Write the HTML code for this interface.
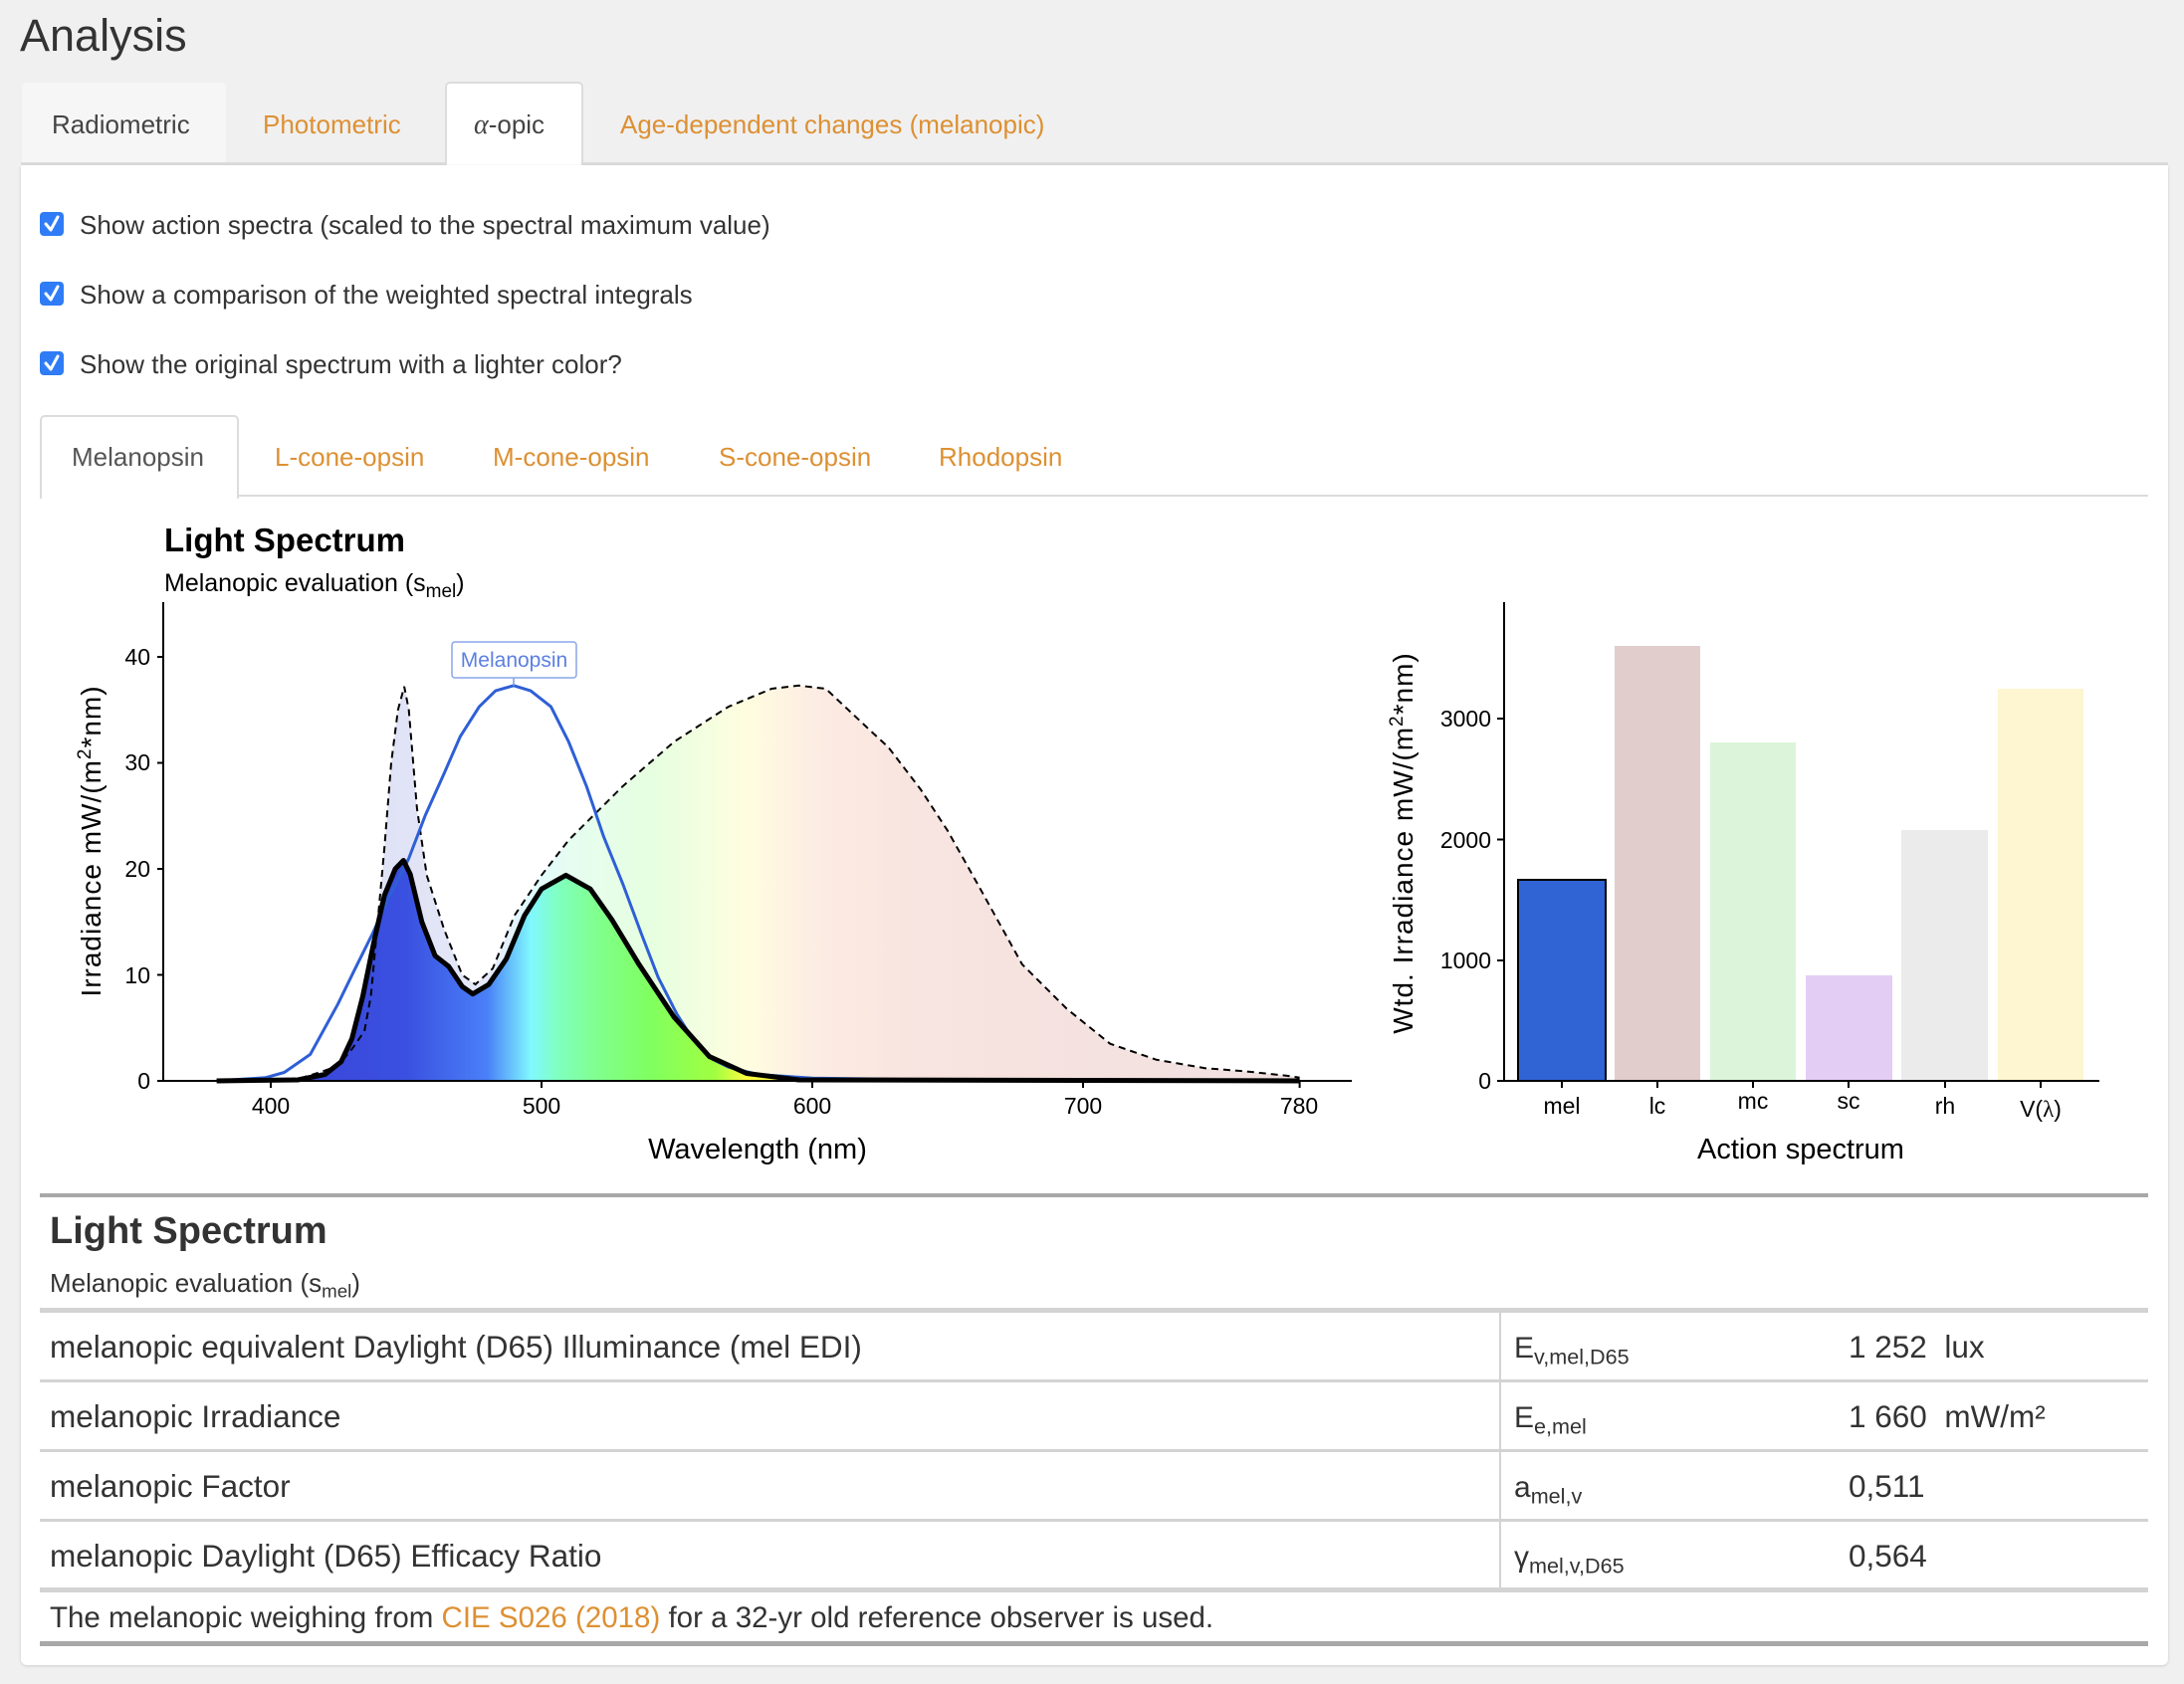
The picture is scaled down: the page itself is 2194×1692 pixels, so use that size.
<!DOCTYPE html>
<html><head><meta charset="utf-8"><style>
*{margin:0;padding:0;box-sizing:border-box}
body{width:2194px;height:1692px;background:#f0f0f0;font-family:"Liberation Sans",sans-serif;position:relative;overflow:hidden;color:#333}
.a{position:absolute;white-space:nowrap}
.o{color:#dd9033}
.tab{position:absolute;font-size:26px;line-height:40px}
.cb{position:absolute;width:24px;height:24px;border-radius:4px;background:#2f7cf6}
.ck{position:absolute;font-size:26px;line-height:36px;color:#333}
.ln{position:absolute;left:40px;width:2118px}
.t{position:absolute;font-size:31.5px;line-height:40px;color:#333;white-space:nowrap}
sub{font-size:0.72em;vertical-align:-0.3em;line-height:0}
</style></head><body>
<div class="a" style="left:20px;top:8px;font-size:45px;line-height:56px;color:#333">Analysis</div>

<div style="position:absolute;left:22px;top:83px;width:205px;height:82px;background:#f6f6f6;border-radius:5px 5px 0 0"></div>
<div style="position:absolute;left:21px;top:163px;width:2157px;height:3px;background:#dcdcdc"></div>
<div style="position:absolute;left:447px;top:82px;width:139px;height:86px;background:#fff;border:2px solid #dcdcdc;border-bottom:none;border-radius:5px 5px 0 0"></div>
<div style="position:absolute;left:21px;top:166px;width:2157px;height:1507px;background:#fff;border-radius:0 0 6px 6px;box-shadow:0 1px 3px rgba(0,0,0,0.15)"></div>
<div class="tab" style="left:52px;top:105px;color:#444">Radiometric</div>
<div class="tab o" style="left:264px;top:105px">Photometric</div>
<div class="tab" style="left:476px;top:105px;color:#444"><i style="font-family:'Liberation Serif',serif;font-size:28px">α</i>-opic</div>
<div class="tab o" style="left:623px;top:105px">Age-dependent changes (melanopic)</div>

<div class="cb" style="left:40px;top:213px"></div><div class="ck" style="left:80px;top:208px">Show action spectra (scaled to the spectral maximum value)</div>
<div class="cb" style="left:40px;top:283px"></div><div class="ck" style="left:80px;top:278px">Show a comparison of the weighted spectral integrals</div>
<div class="cb" style="left:40px;top:353px"></div><div class="ck" style="left:80px;top:348px">Show the original spectrum with a lighter color?</div>
<svg style="position:absolute;left:0;top:0" width="80" height="400">
<g fill="none" stroke="#fff" stroke-width="3" stroke-linecap="round" stroke-linejoin="round">
<path d="M46 225 L51 231 L58 218"/><path d="M46 295 L51 301 L58 288"/><path d="M46 365 L51 371 L58 358"/></g></svg>

<div style="position:absolute;left:40px;top:497px;width:2118px;height:2px;background:#dcdcdc"></div>
<div style="position:absolute;left:40px;top:417px;width:200px;height:84px;background:#fff;border:2px solid #dcdcdc;border-bottom:none;border-radius:5px 5px 0 0"></div>
<div class="tab" style="left:72px;top:439px;color:#555">Melanopsin</div>
<div class="tab o" style="left:276px;top:439px">L-cone-opsin</div>
<div class="tab o" style="left:495px;top:439px">M-cone-opsin</div>
<div class="tab o" style="left:722px;top:439px">S-cone-opsin</div>
<div class="tab o" style="left:943px;top:439px">Rhodopsin</div>

<svg style="position:absolute;left:0;top:0" width="2194" height="1200" font-family="Liberation Sans, sans-serif">
<defs>
<linearGradient id="lg" gradientUnits="userSpaceOnUse" x1="217.6" y1="0" x2="1305.6" y2="0">
<stop offset="0" stop-color="#dcdef4"/><stop offset="0.15" stop-color="#e0e2f5"/><stop offset="0.25" stop-color="#e4e8f8"/>
<stop offset="0.29" stop-color="#e2fbff"/><stop offset="0.33" stop-color="#e6fdf0"/><stop offset="0.4" stop-color="#e6ffe0"/>
<stop offset="0.49" stop-color="#fffde0"/><stop offset="0.55" stop-color="#fdece2"/><stop offset="0.65" stop-color="#f8e4e0"/>
<stop offset="1" stop-color="#f0e0e0"/></linearGradient>
<linearGradient id="dg" gradientUnits="userSpaceOnUse" x1="217.6" y1="0" x2="1305.6" y2="0">
<stop offset="0" stop-color="#3a3fd6"/><stop offset="0.175" stop-color="#3a50e0"/><stop offset="0.25" stop-color="#4a80f8"/>
<stop offset="0.29" stop-color="#80f8ff"/><stop offset="0.315" stop-color="#80ffc0"/><stop offset="0.35" stop-color="#80ff90"/>
<stop offset="0.4" stop-color="#80ff60"/><stop offset="0.46" stop-color="#a0ff40"/><stop offset="0.49" stop-color="#ffff40"/><stop offset="1" stop-color="#ffff60"/></linearGradient>
</defs>
<text x="165" y="554" font-size="33" font-weight="bold" fill="#000">Light Spectrum</text>
<text x="165" y="594" font-size="25" fill="#000">Melanopic evaluation (s<tspan font-size="19" dy="6">mel</tspan><tspan dy="-6">)</tspan></text>

<path fill="url(#lg)" d="M217.6,1086 L272,1086 303.6,1082.8 321,1077.5 339.2,1071.1 353.6,1054 366.1,1036 372.6,1000.8 379.4,926.3 386.2,851.7 393,766.5 399.8,713.3 406.1,689.8 410.7,713.3 418.9,812.3 428.7,879.4 446.1,933.7 464.3,979.5 477.6,989.1 495,973.1 516.8,919.9 544,879.4 571.2,844.2 625.6,790 677.3,745.2 731.7,710.1 775.2,692 802.4,688.8 829.6,692 874.8,734.5 892.2,750.5 924.8,793.1 952,834.7 981.9,887.9 1026.8,968.9 1071.7,1013.6 1115.2,1048.7 1161.4,1064.7 1210.4,1073.2 1251.2,1076.4 1292,1080.7 1305.6,1082.8 1305.6,1086 Z"/>
<path fill="url(#dg)" d="M217.6,1086 L299.2,1085 326.4,1079.6 342.7,1066.8 353.6,1043.4 364.5,1000.8 375.4,947.5 386.2,899.6 397.1,873 405.3,864.5 412.1,878.3 423.8,926.3 437.1,960.3 450.7,971 464.3,991.2 474.9,998.7 491,989.1 508.6,963.5 526.9,919.9 544,893.2 568.5,879.4 593,893.2 614.7,924.1 641.9,968.9 677.3,1022.1 712.6,1061.5 750,1078.5 802.4,1085 1305.6,1086 Z"/>
<polyline fill="none" stroke="#000" stroke-width="2" stroke-dasharray="7,5" points="217.6,1086 272,1086 303.6,1082.8 321,1077.5 339.2,1071.1 353.6,1054 366.1,1036 372.6,1000.8 379.4,926.3 386.2,851.7 393,766.5 399.8,713.3 406.1,689.8 410.7,713.3 418.9,812.3 428.7,879.4 446.1,933.7 464.3,979.5 477.6,989.1 495,973.1 516.8,919.9 544,879.4 571.2,844.2 625.6,790 677.3,745.2 731.7,710.1 775.2,692 802.4,688.8 829.6,692 874.8,734.5 892.2,750.5 924.8,793.1 952,834.7 981.9,887.9 1026.8,968.9 1071.7,1013.6 1115.2,1048.7 1161.4,1064.7 1210.4,1073.2 1251.2,1076.4 1292,1080.7 1305.6,1082.8"/>
<polyline fill="none" stroke="#2f5fd6" stroke-width="3" stroke-linejoin="round" points="217.6,1086 266.6,1082.8 285.6,1077.5 311.7,1059.4 339.2,1009.3 356.3,974.2 374.8,936.9 391.7,899.6 410.7,862.4 427,819.8 446.1,777.2 462.4,739.9 481.4,710.1 497.8,694.1 516,688.8 533.1,694.1 553.5,710.1 571.2,745.2 589.2,790 606.6,841.1 625.6,887.9 644.6,939 661,981.6 680,1018.9 696.3,1044.5 712.6,1062.6 731.7,1072.2 761.6,1079.6 816,1083.3 952,1085 1305.6,1085.5"/>
<polyline fill="none" stroke="#000" stroke-width="5" stroke-linejoin="round" points="217.6,1086 299.2,1085 326.4,1079.6 342.7,1066.8 353.6,1043.4 364.5,1000.8 375.4,947.5 386.2,899.6 397.1,873 405.3,864.5 412.1,878.3 423.8,926.3 437.1,960.3 450.7,971 464.3,991.2 474.9,998.7 491,989.1 508.6,963.5 526.9,919.9 544,893.2 568.5,879.4 593,893.2 614.7,924.1 641.9,968.9 677.3,1022.1 712.6,1061.5 750,1078.5 802.4,1085 1305.6,1086"/>
<line x1="516" y1="681" x2="516" y2="689" stroke="#7a9ae6" stroke-width="1.5"/>
<rect x="454" y="645" width="125" height="36" rx="3" fill="#fff" stroke="#8aa6ea" stroke-width="1.5"/>
<text x="516.5" y="670" font-size="21" fill="#5b80e0" text-anchor="middle">Melanopsin</text>
<g stroke="#000" stroke-width="2">
<line x1="164" y1="605" x2="164" y2="1087"/><line x1="158" y1="1086" x2="1358" y2="1086"/>
<line x1="158" y1="660" x2="164" y2="660"/><line x1="158" y1="766.5" x2="164" y2="766.5"/><line x1="158" y1="873" x2="164" y2="873"/><line x1="158" y1="979.5" x2="164" y2="979.5"/>
<line x1="272" y1="1086" x2="272" y2="1093"/><line x1="544" y1="1086" x2="544" y2="1093"/><line x1="816" y1="1086" x2="816" y2="1093"/><line x1="1088" y1="1086" x2="1088" y2="1093"/><line x1="1305.6" y1="1086" x2="1305.6" y2="1093"/>
</g>
<g font-size="23" fill="#000" text-anchor="end">
<text x="151" y="668">40</text><text x="151" y="774">30</text><text x="151" y="881">20</text><text x="151" y="988">10</text><text x="151" y="1094">0</text></g>
<g font-size="23" fill="#000" text-anchor="middle">
<text x="272" y="1119">400</text><text x="544" y="1119">500</text><text x="816" y="1119">600</text><text x="1088" y="1119">700</text><text x="1305" y="1119">780</text></g>
<text x="761" y="1164" font-size="29" fill="#000" text-anchor="middle">Wavelength (nm)</text>
<text transform="translate(101,845) rotate(-90)" font-size="28" fill="#000" text-anchor="middle" letter-spacing="1">Irradiance  mW/(m<tspan font-size="19" dy="-10">2</tspan><tspan dy="10">*nm)</tspan></text>

<rect x="1525" y="884" width="88" height="202" fill="#3063d4" stroke="#000" stroke-width="2"/>
<rect x="1622" y="649" width="86" height="437" fill="#e2cdcd"/>
<rect x="1718" y="746" width="86" height="340" fill="#dcf5da"/>
<rect x="1814" y="980" width="87" height="106" fill="#e4cdf4"/>
<rect x="1910" y="834" width="87" height="252" fill="#ebebeb"/>
<rect x="2007" y="692" width="86" height="394" fill="#fdf6d0"/>
<g stroke="#000" stroke-width="2">
<line x1="1511" y1="605" x2="1511" y2="1087"/><line x1="1504" y1="1086" x2="2109" y2="1086"/>
<line x1="1504" y1="965" x2="1511" y2="965"/><line x1="1504" y1="843.5" x2="1511" y2="843.5"/><line x1="1504" y1="722" x2="1511" y2="722"/>
<line x1="1569" y1="1086" x2="1569" y2="1093"/><line x1="1665" y1="1086" x2="1665" y2="1093"/><line x1="1761" y1="1086" x2="1761" y2="1093"/><line x1="1857" y1="1086" x2="1857" y2="1093"/><line x1="1954" y1="1086" x2="1954" y2="1093"/><line x1="2050" y1="1086" x2="2050" y2="1093"/>
</g>
<g font-size="23" fill="#000" text-anchor="end">
<text x="1498" y="730">3000</text><text x="1498" y="852">2000</text><text x="1498" y="973">1000</text><text x="1498" y="1094">0</text></g>
<g font-size="23" fill="#000" text-anchor="middle">
<text x="1569" y="1119">mel</text><text x="1665" y="1119">lc</text><text x="1761" y="1114">mc</text><text x="1857" y="1114">sc</text><text x="1954" y="1119">rh</text><text x="2050" y="1122">V(<tspan font-family="Liberation Serif, serif">λ</tspan>)</text></g>
<text x="1809" y="1164" font-size="29" fill="#000" text-anchor="middle">Action spectrum</text>
<text transform="translate(1419,847) rotate(-90)" font-size="28" fill="#000" text-anchor="middle" letter-spacing="1">Wtd. Irradiance  mW/(m<tspan font-size="19" dy="-10">2</tspan><tspan dy="10">*nm)</tspan></text>
</svg>

<div class="ln" style="top:1199px;height:4px;background:#a8a8a8"></div>
<div class="a" style="left:50px;top:1214px;font-size:38px;line-height:46px;font-weight:bold;color:#333">Light Spectrum</div>
<div class="a" style="left:50px;top:1272px;font-size:26px;line-height:34px;color:#333">Melanopic evaluation (s<sub>mel</sub>)</div>
<div class="ln" style="top:1314px;height:5px;background:#d3d3d3"></div>
<div class="ln" style="top:1386px;height:3px;background:#d3d3d3"></div>
<div class="ln" style="top:1456px;height:3px;background:#d3d3d3"></div>
<div class="ln" style="top:1526px;height:3px;background:#d3d3d3"></div>
<div class="ln" style="top:1595px;height:5px;background:#d3d3d3"></div>
<div style="position:absolute;left:1506px;top:1319px;width:2px;height:277px;background:#d3d3d3"></div>
<div class="t" style="left:50px;top:1333px">melanopic equivalent Daylight (D65) Illuminance (mel EDI)</div>
<div class="t" style="left:50px;top:1403px">melanopic Irradiance</div>
<div class="t" style="left:50px;top:1473px">melanopic Factor</div>
<div class="t" style="left:50px;top:1543px">melanopic Daylight (D65) Efficacy Ratio</div>
<div class="t" style="left:1521px;top:1335px;font-size:30px">E<sub>v,mel,D65</sub></div>
<div class="t" style="left:1521px;top:1405px;font-size:30px">E<sub>e,mel</sub></div>
<div class="t" style="left:1521px;top:1475px;font-size:30px">a<sub>mel,v</sub></div>
<div class="t" style="left:1521px;top:1545px;font-size:30px">γ<sub>mel,v,D65</sub></div>
<div class="t" style="left:1857px;top:1333px">1 252 &nbsp;lux</div>
<div class="t" style="left:1857px;top:1403px">1 660 &nbsp;mW/m²</div>
<div class="t" style="left:1857px;top:1473px">0,511</div>
<div class="t" style="left:1857px;top:1543px">0,564</div>
<div class="t" style="left:50px;top:1606px;font-size:29.5px">The melanopic weighing from <span class="o">CIE S026 (2018)</span> for a 32-yr old reference observer is used.</div>
<div class="ln" style="top:1649px;height:5px;background:#a8a8a8"></div>
</body></html>
